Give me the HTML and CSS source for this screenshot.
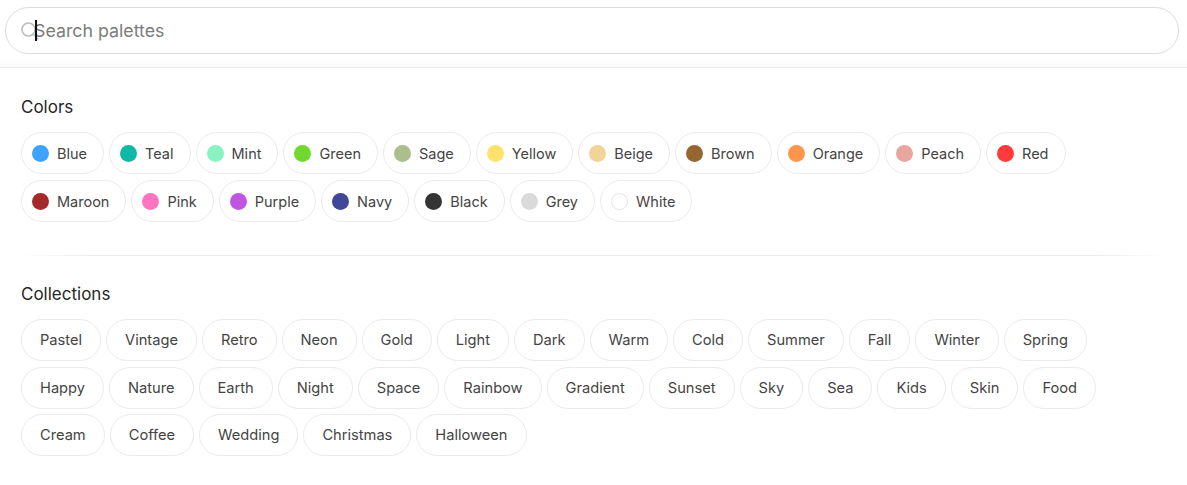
FILE: index.html
```html
<!DOCTYPE html>
<html lang="en">
<head>
<meta charset="utf-8">
<title>Palettes</title>
<link rel="stylesheet" href="styles.css">
</head>
<body>
<header class="search-bar">
  <label class="search">
    <svg class="search-icon" width="20" height="20" viewBox="0 0 20 20" fill="none" stroke="#bdbdbd" stroke-width="1.6" stroke-linecap="round"><circle cx="8.5" cy="8.5" r="6.5"/><path d="M13.5 13.5 L18 18"/></svg>
    <input class="search-input" type="text" placeholder="Search palettes">
    <span class="caret"></span>
  </label>
</header>
<main class="content">
  <section class="group">
    <h2 class="group-title">Colors</h2>
    <div class="chips">
      <span class="chip color"><i class="dot" style="background:#3fa2ff"></i>Blue</span>
      <span class="chip color"><i class="dot" style="background:#10b9a6"></i>Teal</span>
      <span class="chip color"><i class="dot" style="background:#88f2c0"></i>Mint</span>
      <span class="chip color"><i class="dot" style="background:#6fd92e"></i>Green</span>
      <span class="chip color"><i class="dot" style="background:#abbf8c"></i>Sage</span>
      <span class="chip color"><i class="dot" style="background:#ffe16b"></i>Yellow</span>
      <span class="chip color"><i class="dot" style="background:#f2d398"></i>Beige</span>
      <span class="chip color"><i class="dot" style="background:#966631"></i>Brown</span>
      <span class="chip color"><i class="dot" style="background:#ff954b"></i>Orange</span>
      <span class="chip color"><i class="dot" style="background:#eba59f"></i>Peach</span>
      <span class="chip color"><i class="dot" style="background:#ff3a3a"></i>Red</span>
      <span class="chip color"><i class="dot" style="background:#a6292a"></i>Maroon</span>
      <span class="chip color"><i class="dot" style="background:#ff74c0"></i>Pink</span>
      <span class="chip color"><i class="dot" style="background:#c055e1"></i>Purple</span>
      <span class="chip color"><i class="dot" style="background:#414699"></i>Navy</span>
      <span class="chip color"><i class="dot" style="background:#343434"></i>Black</span>
      <span class="chip color"><i class="dot" style="background:#dadada"></i>Grey</span>
      <span class="chip color"><i class="dot dot-white"></i>White</span>
    </div>
  </section>
  <hr class="divider">
  <section class="group">
    <h2 class="group-title">Collections</h2>
    <div class="chips chips-tight">
      <span class="chip tag">Pastel</span>
      <span class="chip tag">Vintage</span>
      <span class="chip tag">Retro</span>
      <span class="chip tag">Neon</span>
      <span class="chip tag">Gold</span>
      <span class="chip tag">Light</span>
      <span class="chip tag">Dark</span>
      <span class="chip tag">Warm</span>
      <span class="chip tag">Cold</span>
      <span class="chip tag">Summer</span>
      <span class="chip tag">Fall</span>
      <span class="chip tag">Winter</span>
      <span class="chip tag">Spring</span>
      <span class="chip tag">Happy</span>
      <span class="chip tag">Nature</span>
      <span class="chip tag">Earth</span>
      <span class="chip tag">Night</span>
      <span class="chip tag">Space</span>
      <span class="chip tag">Rainbow</span>
      <span class="chip tag">Gradient</span>
      <span class="chip tag">Sunset</span>
      <span class="chip tag">Sky</span>
      <span class="chip tag">Sea</span>
      <span class="chip tag">Kids</span>
      <span class="chip tag">Skin</span>
      <span class="chip tag">Food</span>
      <span class="chip tag">Cream</span>
      <span class="chip tag">Coffee</span>
      <span class="chip tag">Wedding</span>
      <span class="chip tag">Christmas</span>
      <span class="chip tag">Halloween</span>
    </div>
  </section>
</main>
</body>
</html>
```

FILE: styles.css
```css
* { box-sizing: border-box; }
html, body { margin: 0; padding: 0; background: #fff; }
body {
  font-family: Inter, "Noto Sans", "Liberation Sans", sans-serif;
  color: #333;
  width: 1187px;
}
.search-bar {
  padding: 7px 8px 13px 5px;
  border-bottom: 1px solid #ececec;
  box-shadow: inset 0 -10px 10px -8px #f6f6f6;
}
.search {
  position: relative;
  display: flex;
  align-items: center;
  height: 47px;
  border: 1px solid #dcdcdc;
  border-radius: 24px;
  padding: 0 16px 0 14px;
  background: #fff;
}
.search-icon { flex: none; margin-right: -6px; margin-top: 1px; }
.search-input {
  flex: 1;
  border: 0;
  outline: none;
  background: transparent;
  font-family: inherit;
  font-size: 17.8px;
  color: #333;
  padding: 0;
  caret-color: transparent;
}
.search-input::placeholder { color: #7c7c7c; }
.caret {
  position: absolute;
  left: 29px;
  top: 12px;
  width: 2px;
  height: 21px;
  background: #111;
}
.content { padding: 25px 21px 20px 21px; }
.group-title {
  margin: 0 0 11px 0;
  font-size: 17px;
  font-weight: 400;
  line-height: 28px;
  color: #262626;
}
.chips { display: flex; flex-wrap: wrap; gap: 6px 5px; }
.chips-tight { row-gap: 5.5px; }
.chip {
  display: inline-flex;
  align-items: center;
  height: 42px;
  padding: 0 18px;
  border: 1px solid #ebebeb;
  border-radius: 21px;
  font-size: 14.5px;
  color: #444;
  white-space: nowrap;
}
.chip.tag { font-size: 14.65px; }
.chip.color { padding: 0 16px 0 10px; }
.dot {
  display: inline-block;
  width: 17px;
  height: 17px;
  border-radius: 50%;
  margin-right: 8px;
}
.dot-white { background: #fff; border: 1px solid #e3e3e3; }
.divider {
  border: 0;
  height: 1px;
  margin: 33px 0 24px 0;
  background: linear-gradient(90deg, rgba(235,235,235,0) 0%, #ececec 6%, #ececec 94%, rgba(235,235,235,0) 100%);
}
```
